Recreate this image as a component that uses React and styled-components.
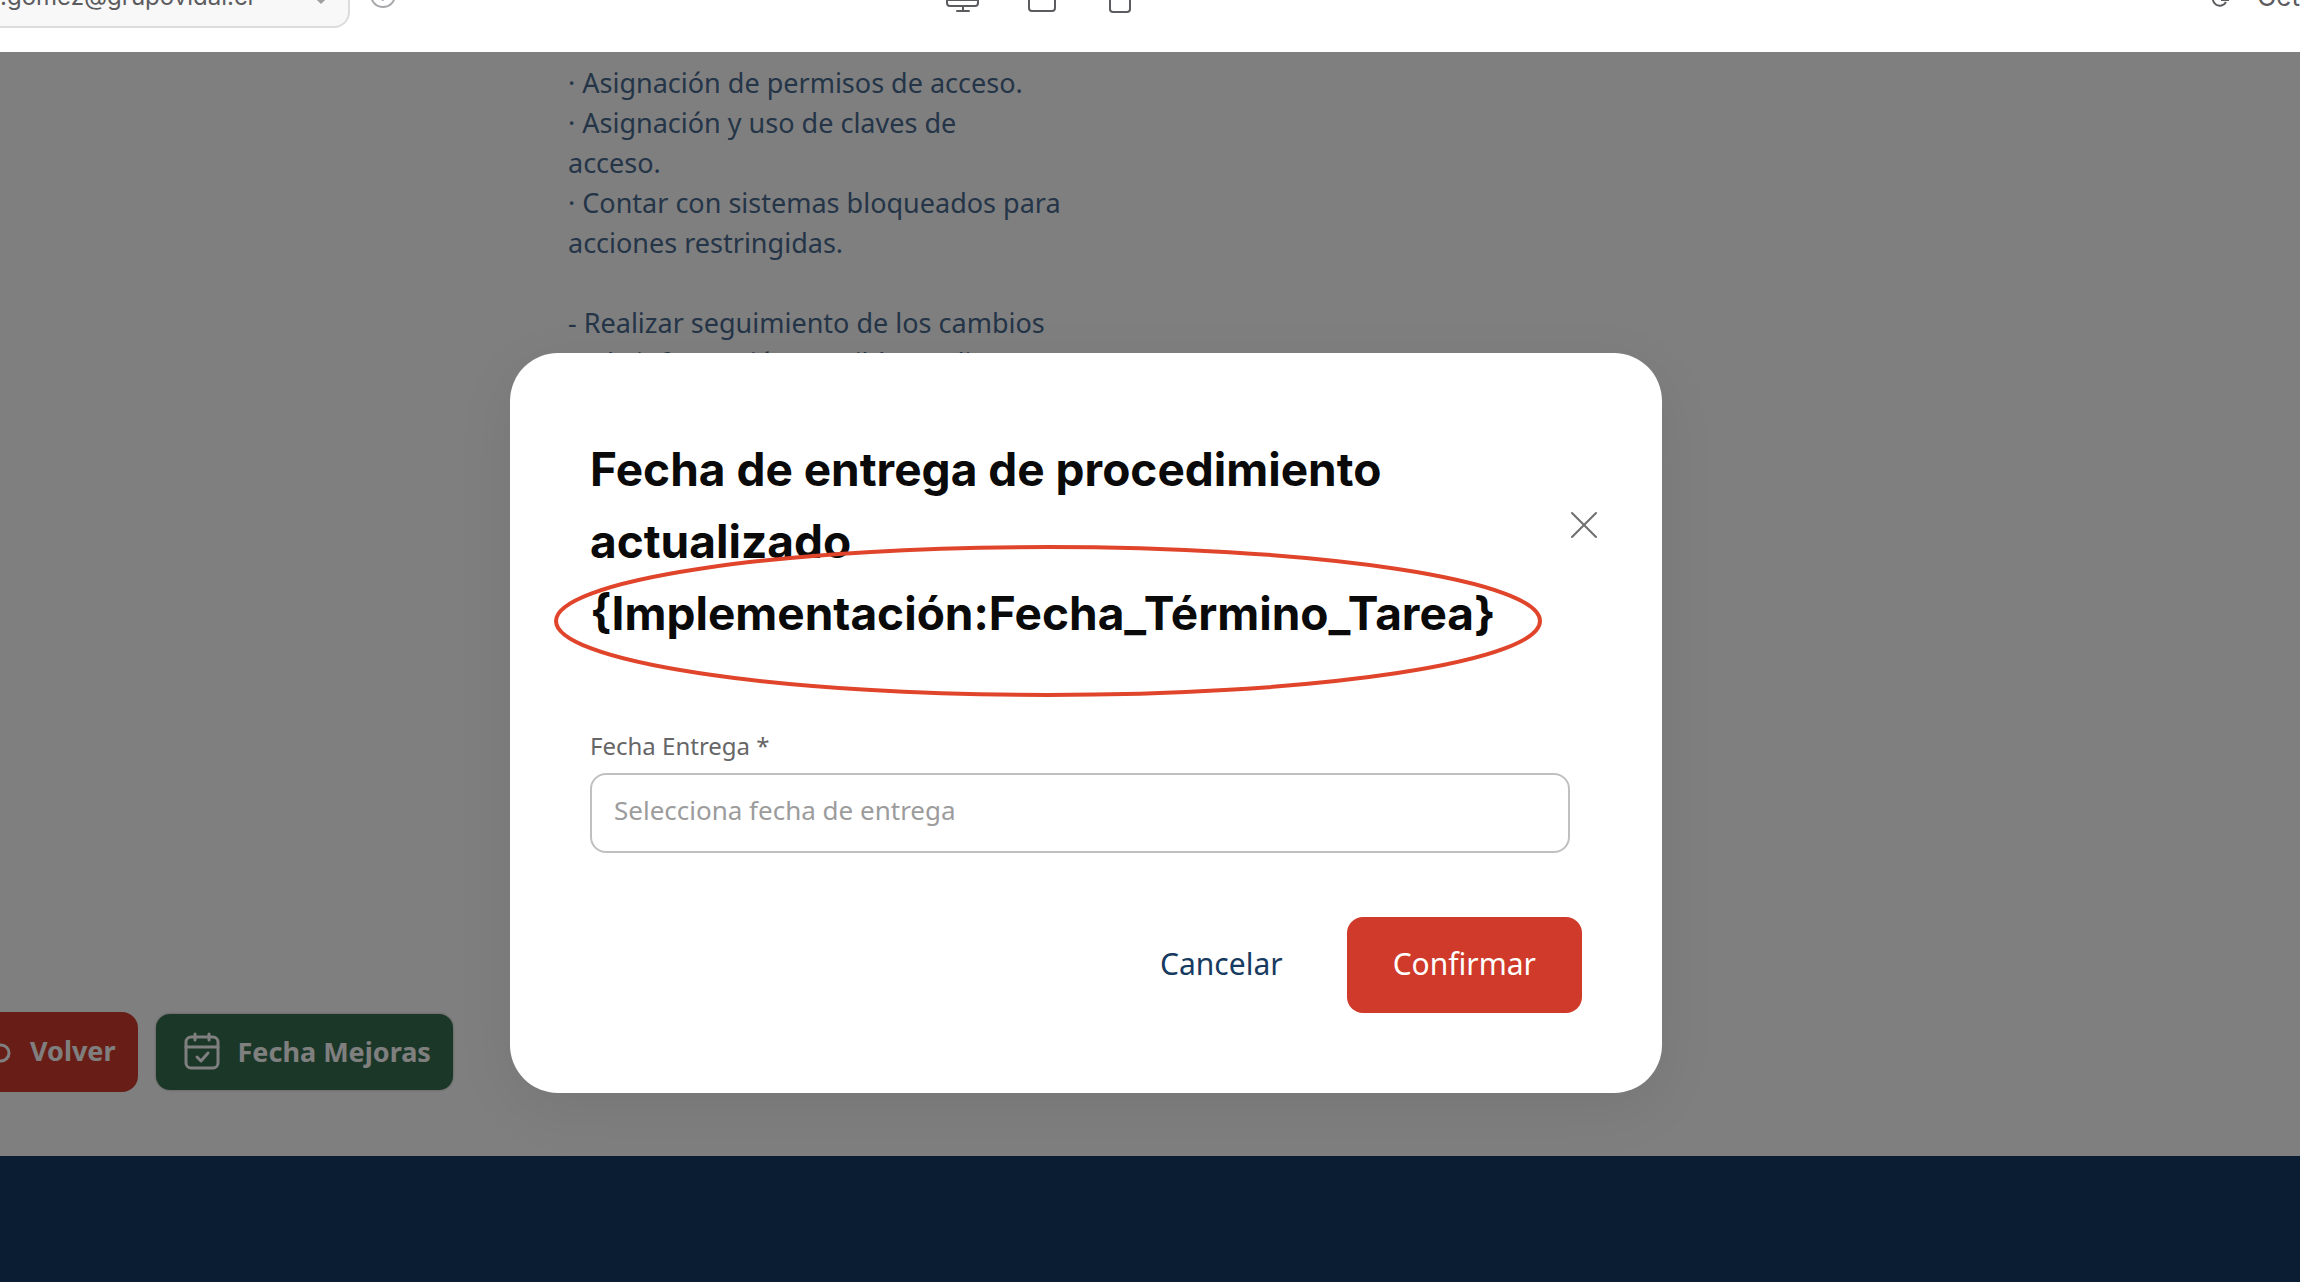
import React, { useState } from 'react';
import styled, { createGlobalStyle } from 'styled-components';

const GlobalStyle = createGlobalStyle`
  *, *::before, *::after {
    box-sizing: border-box;
  }
  body {
    margin: 0;
    background: #fff;
    font-family: 'Noto Sans', 'Open Sans', sans-serif;
  }
  button, input, select {
    font-family: inherit;
  }
`;

const Page = styled.div`
  display: flex;
  flex-direction: column;
  height: 100vh;
  overflow: hidden;
`;

const Toolbar = styled.header`
  display: grid;
  grid-template-columns: 17fr auto 21fr;
  grid-template-rows: 52px;
  align-items: end;
  flex-shrink: 0;
  height: 52px;
  background: #fff;
  overflow: hidden;
  color: #5c5c60;
  font-family: Inter, sans-serif;
`;

const ToolbarGroup = styled.div`
  display: flex;
  align-items: flex-end;
  justify-content: ${props => props.$align || 'flex-start'};
  gap: ${props => props.$gap}px;
  padding-bottom: ${props => props.$bottom}px;
`;

const AccountField = styled.div`
  position: relative;
  width: 350px;
  height: 64px;
`;

const AccountSelect = styled.select`
  appearance: none;
  width: 100%;
  height: 64px;
  padding: 0 60px 0 0;
  background: #f8f8f8;
  border: 2px solid #dcdcdc;
  border-left: none;
  border-radius: 0 16px 16px 0;
  color: #5c5c60;
  font-size: 24px;
`;

const AccountChevron = styled.svg`
  position: absolute;
  right: 18px;
  bottom: 22px;
`;

const HelpButton = styled.button`
  display: flex;
  align-items: center;
  justify-content: center;
  width: 26px;
  height: 26px;
  margin-bottom: 20px;
  padding: 0;
  background: none;
  border: 2px solid #a8a8ac;
  border-radius: 50%;
  color: #a8a8ac;
  font-size: 16px;
`;

const IconButton = styled.button`
  display: flex;
  padding: 0;
  border: none;
  background: none;
  color: inherit;
`;

const TextButton = styled.button`
  padding: 0;
  border: none;
  background: none;
  color: inherit;
  font-size: 26px;
  line-height: 30px;
`;

const Stage = styled.main`
  position: relative;
  flex: 1;
  display: flex;
  flex-direction: column;
  min-height: 0;
  background: #fff;
`;

const Content = styled.div`
  flex: 1;
  display: flex;
  flex-direction: column;
  justify-content: space-between;
  min-height: 0;
  overflow: hidden;
`;

const Copy = styled.p`
  width: 520px;
  margin: 11px 0 0 568px;
  color: #4a6a90;
  font-size: 27px;
  line-height: 40px;
  white-space: pre-line;
`;

const PageActions = styled.div`
  display: flex;
  align-items: center;
  gap: 18px;
  padding-bottom: 64px;
`;

const PageButton = styled.button`
  display: flex;
  align-items: center;
  gap: 18px;
  height: ${props => props.$height}px;
  padding: ${props => props.$padding};
  background: ${props => props.$color};
  border: none;
  border-radius: ${props => props.$radius};
  box-shadow: ${props => (props.$raised ? '0 0 2px 1px rgba(0, 0, 0, 0.15)' : 'none')};
  color: #fff;
  font-size: 27px;
  font-weight: 700;
`;

const Footer = styled.footer`
  height: 126px;
  background: #163b66;
`;

const Overlay = styled.div`
  position: absolute;
  inset: 0;
  display: flex;
  justify-content: center;
  align-items: flex-start;
  padding: 301px 128px 0 0;
  background: rgba(0, 0, 0, 0.5);
`;

const Dialog = styled.section`
  width: 1152px;
  padding: 80px;
  background: #fff;
  border-radius: 48px;
  box-shadow: 0 16px 60px rgba(0, 0, 0, 0.07);
`;

const DialogHeader = styled.div`
  display: flex;
  align-items: center;
  justify-content: space-between;
  margin-right: -16px;
`;

const TitleBox = styled.div`
  position: relative;
`;

const Title = styled.h2`
  margin: 0;
  max-width: 910px;
  color: #0a0a0a;
  font-family: Inter, sans-serif;
  font-size: 46px;
  font-weight: 700;
  line-height: 72px;
`;

/* marks the unresolved template variable */
const Highlight = styled.svg`
  position: absolute;
  left: -36px;
  top: 112px;
`;

const CloseButton = styled(IconButton)`
  padding-bottom: 32px;
`;

const Field = styled.div`
  display: flex;
  flex-direction: column;
  gap: 10px;
  padding: 80px 12px 0 0;
`;

const Label = styled.label`
  color: #666;
  font-size: 24px;
  line-height: 34px;
`;

const Input = styled.input`
  width: 100%;
  height: 80px;
  padding: 0 22px 6px;
  border: 2px solid #c0c0c0;
  border-radius: 16px;
  font-size: 26px;
  color: #333;
  &::placeholder {
    color: #9c9c9c;
  }
`;

const DialogActions = styled.div`
  display: flex;
  justify-content: flex-end;
  gap: 18px;
  padding-top: 64px;
`;

const DialogButton = styled.button`
  height: 96px;
  padding: 0 46px 4px;
  border: none;
  border-radius: 16px;
  background: ${props => (props.$primary ? '#cf3a2a' : 'transparent')};
  color: ${props => (props.$primary ? '#fff' : '#173a60')};
  font-size: 30px;
`;

const copyText = `· Asignación de permisos de acceso.
· Asignación y uso de claves de
acceso.
· Contar con sistemas bloqueados para
acciones restringidas.

- Realizar seguimiento de los cambios
en la información sensible mediante`;

function App() {
  const [date, setDate] = useState('');

  return (
    <Page>
      <GlobalStyle />
      <Toolbar>
        <ToolbarGroup $gap={20} $bottom={24}>
          <AccountField>
            <AccountSelect aria-label="Usuario">
              <option>.gomez@grupovidal.cl</option>
            </AccountSelect>
            <AccountChevron width="22" height="14" viewBox="0 0 22 14" fill="none" stroke="#a0a0a4" strokeWidth="3">
              <path d="M5 4l6 6 6-6" />
            </AccountChevron>
          </AccountField>
          <HelpButton aria-label="Ayuda">?</HelpButton>
        </ToolbarGroup>

        <ToolbarGroup $gap={48} $bottom={39}>
          <IconButton aria-label="Escritorio">
            <svg width="34" height="32" viewBox="0 0 34 32" fill="none" stroke="currentColor" strokeWidth="2" strokeLinecap="round">
              <rect x="1" y="1" width="31" height="24" rx="3" />
              <path d="M2 19h30M17 25v5M11 30h12" />
            </svg>
          </IconButton>
          <IconButton aria-label="Tableta">
            <svg width="28" height="34" viewBox="0 0 28 34" fill="none" stroke="currentColor" strokeWidth="2">
              <rect x="1" y="1" width="26" height="31" rx="3" />
            </svg>
          </IconButton>
          <IconButton aria-label="Teléfono">
            <svg width="28" height="34" viewBox="0 0 28 34" fill="none" stroke="currentColor" strokeWidth="2">
              <rect x="6" y="1" width="20" height="32" rx="3" />
            </svg>
          </IconButton>
        </ToolbarGroup>

        <ToolbarGroup $align="flex-end" $gap={26} $bottom={40}>
          <IconButton aria-label="Recargar">
            <svg width="20" height="24" viewBox="0 0 20 24" fill="none" stroke="currentColor" strokeWidth="2">
              <path d="M14 6a7 7 0 1 0 1 8M10 12h7v-6" />
            </svg>
          </IconButton>
          <TextButton>Get</TextButton>
        </ToolbarGroup>
      </Toolbar>

      <Stage>
        <Content>
          <Copy>{copyText}</Copy>
          <PageActions>
            <PageButton $color="#d13c2c" $height={80} $padding="0 22px 4px 0" $radius="0 16px 16px 0">
              <svg width="12" height="36" viewBox="0 0 12 36" fill="none" stroke="#fff" strokeWidth="3">
                <path d="M0 13h1a8 8 0 0 1 0 16h-1" />
              </svg>
              Volver
            </PageButton>
            <PageButton $raised $color="#366e50" $height={76} $padding="0 22px 2px 28px" $radius="14px">
              <svg width="36" height="40" viewBox="0 0 36 40" fill="none" stroke="#fff" strokeWidth="3" strokeLinecap="round" strokeLinejoin="round">
                <rect x="2" y="6" width="32" height="31" rx="5" />
                <path d="M2 16h32M11 3v6M25 3v6M13 26l4 4 7-8" />
              </svg>
              Fecha Mejoras
            </PageButton>
          </PageActions>
        </Content>
        <Footer />

        <Overlay>
          <Dialog role="dialog" aria-modal="true" aria-labelledby="dialog-title">
            <DialogHeader>
              <TitleBox>
                <Title id="dialog-title">
                  Fecha de entrega de procedimiento actualizado {'{Implementación:Fecha_Término_Tarea}'}
                </Title>
                <Highlight width="988" height="152" viewBox="0 0 988 152" fill="none">
                  <ellipse cx="494" cy="76" rx="492" ry="74" stroke="#e0452c" strokeWidth="4" />
                </Highlight>
              </TitleBox>
              <CloseButton aria-label="Cerrar">
                <svg width="28" height="28" viewBox="0 0 28 28" stroke="#6e6e6e" strokeWidth="2" strokeLinecap="round">
                  <path d="M2 2l24 24M26 2L2 26" />
                </svg>
              </CloseButton>
            </DialogHeader>
            <Field>
              <Label htmlFor="fecha">Fecha Entrega *</Label>
              <Input
                id="fecha"
                value={date}
                onChange={e => setDate(e.target.value)}
                placeholder="Selecciona fecha de entrega"
              />
            </Field>
            <DialogActions>
              <DialogButton>Cancelar</DialogButton>
              <DialogButton $primary>Confirmar</DialogButton>
            </DialogActions>
          </Dialog>
        </Overlay>
      </Stage>
    </Page>
  );
}

export default App;
